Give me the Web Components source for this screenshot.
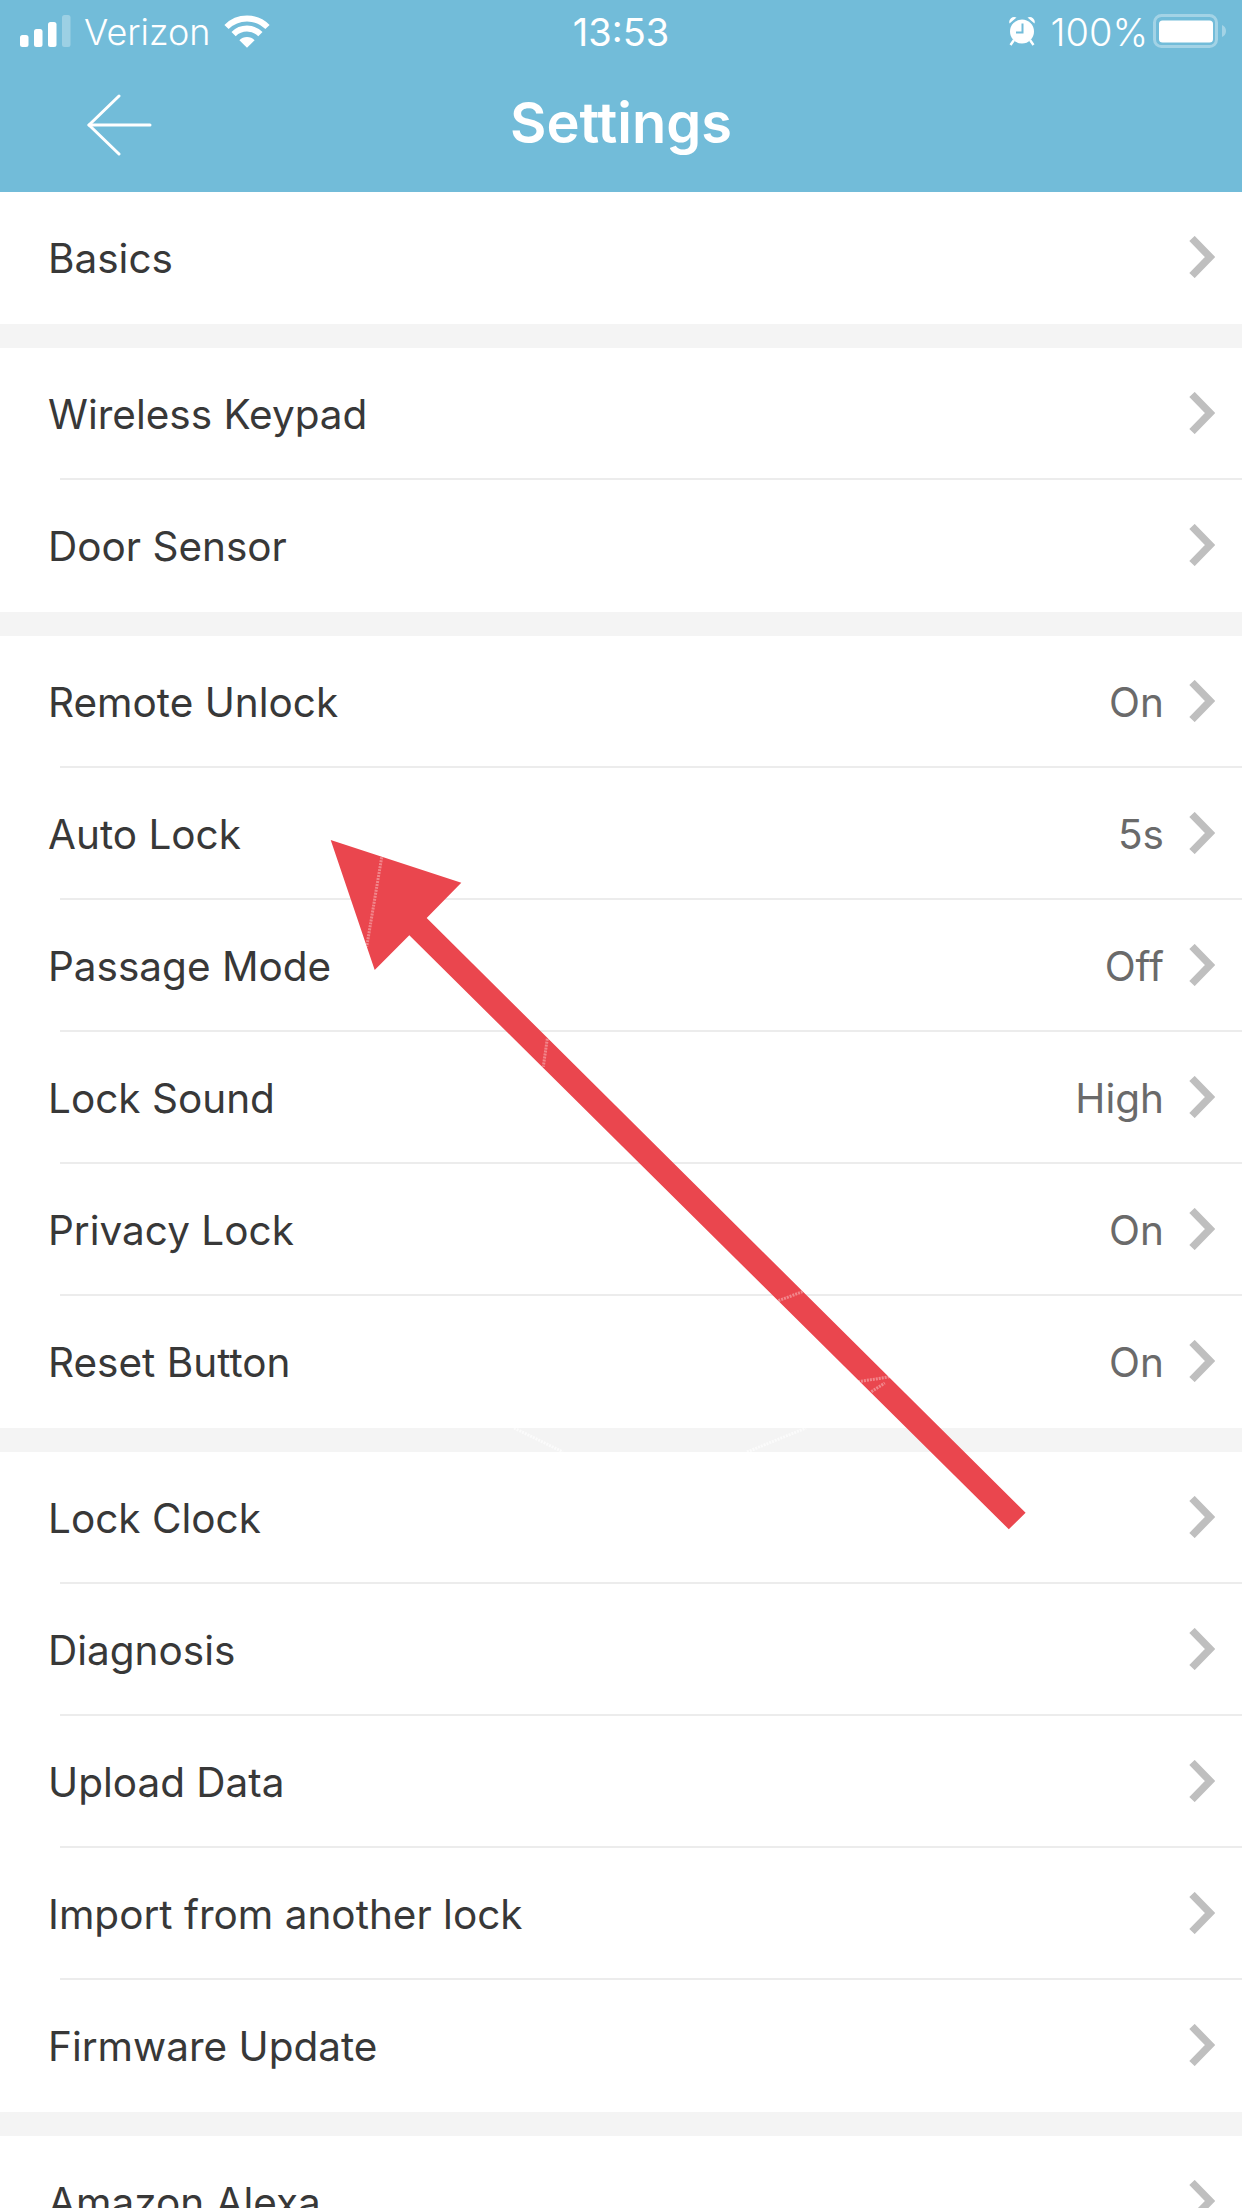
<!DOCTYPE html>
<html lang="en">
<head>
<meta charset="utf-8">
<title>Settings</title>
<style>
  html, body {
    margin: 0;
    padding: 0;
    background: #ffffff;
    font-family: Inter, "Liberation Sans", sans-serif;
  }
</style>
</head>
<body>
<lock-app>
  <lock-status-bar carrier="Verizon" time="13:53" battery="100%"></lock-status-bar>
  <lock-nav-bar title-text="Settings"></lock-nav-bar>
  <lock-group>
    <lock-row label="Basics"></lock-row>
  </lock-group>
  <lock-group>
    <lock-row label="Wireless Keypad"></lock-row>
    <lock-row label="Door Sensor"></lock-row>
  </lock-group>
  <lock-group>
    <lock-row label="Remote Unlock" value="On"></lock-row>
    <lock-row label="Auto Lock" value="5s"></lock-row>
    <lock-row label="Passage Mode" value="Off"></lock-row>
    <lock-row label="Lock Sound" value="High"></lock-row>
    <lock-row label="Privacy Lock" value="On"></lock-row>
    <lock-row label="Reset Button" value="On"></lock-row>
  </lock-group>
  <lock-group>
    <lock-row label="Lock Clock"></lock-row>
    <lock-row label="Diagnosis"></lock-row>
    <lock-row label="Upload Data"></lock-row>
    <lock-row label="Import from another lock"></lock-row>
    <lock-row label="Firmware Update"></lock-row>
  </lock-group>
  <lock-group>
    <lock-row label="Amazon Alexa"></lock-row>
  </lock-group>
  <lock-annotation slot="overlay"></lock-annotation>
</lock-app>

<script>
class LockApp extends HTMLElement {
  constructor() {
    super();

    this.attachShadow( {mode: 'open'} );
    this.shadowRoot.innerHTML = /* template */ `
      <style>
        :host {
          background: #ffffff;
          display: flex;
          flex-direction: column;
          height: 2208px;
          overflow: hidden;
          position: relative;
          width: 1242px;
        }
      </style>
      <slot></slot>
      <slot name="overlay"></slot>
    `;
  }
}

class LockStatusBar extends HTMLElement {
  constructor() {
    super();

    this.attachShadow( {mode: 'open'} );
    this.shadowRoot.innerHTML = /* template */ `
      <style>
        :host {
          align-items: center;
          background: #72bcd9;
          box-sizing: border-box;
          color: #ffffff;
          display: grid;
          flex: none;
          font-family: Inter, "Liberation Sans", sans-serif;
          font-size: 36px;
          font-weight: 300;
          grid-template-columns: 1fr auto 1fr;
          height: 60px;
          line-height: 60px;
        }

        div {
          align-items: center;
          display: flex;
          height: 60px;
        }

        svg {
          display: block;
          flex: none;
        }

        .left {
          padding-left: 20px;
        }

        .carrier {
          margin-left: 13px;
          padding-top: 2px;
        }

        .wifi {
          margin-left: 13px;
        }

        .time {
          font-size: 38px;
          font-weight: 400;
          padding-top: 2px;
        }

        .right {
          justify-content: flex-end;
          padding-right: 16px;
        }

        .percent {
          font-size: 38px;
          margin-left: 14px;
          padding-top: 2px;
        }

        .battery {
          margin-left: 5px;
        }
      </style>
      <div class="left">
        <svg width="51" height="32" viewBox="0 0 51 32" fill="#ffffff">
          <rect x="0" y="20" width="8.5" height="12" rx="2.5"/>
          <rect x="14" y="14" width="8.5" height="18" rx="2.5"/>
          <rect x="28" y="7" width="8.5" height="25" rx="2.5"/>
          <rect x="42" y="0" width="8.5" height="32" rx="2.5" opacity="0.3"/>
        </svg>
        <span class="carrier"></span>
        <svg class="wifi" width="46" height="33" viewBox="0 0 46 33" fill="none" stroke="#ffffff" stroke-width="6">
          <path d="M2.5 12 A29 29 0 0 1 43.5 12"/>
          <path d="M9.6 19.1 A19 19 0 0 1 36.4 19.1"/>
          <path fill="#ffffff" stroke="none" d="M23 32.8 L15.4 25.2 A10.8 10.8 0 0 1 30.6 25.2 Z"/>
        </svg>
      </div>
      <div class="time"></div>
      <div class="right">
        <svg width="28" height="30" viewBox="0 0 28 30">
          <path d="M1.5 7.5 A5 5 0 0 1 8.5 1.5 Z M26.5 7.5 A5 5 0 0 0 19.5 1.5 Z" fill="#ffffff"/>
          <path d="M6 24 L2.5 29 M22 24 L25.5 29" stroke="#ffffff" stroke-width="2.4" fill="none"/>
          <circle cx="14" cy="15.5" r="12" fill="#ffffff"/>
          <path d="M14.5 7.5 V16.5 H8" stroke="#72bcd9" stroke-width="2" fill="none"/>
        </svg>
        <span class="percent"></span>
        <svg class="battery" width="73" height="34" viewBox="0 0 73 34">
          <rect x="1.5" y="1.5" width="62" height="31" rx="7" fill="none" stroke="#ffffff" stroke-opacity="0.35" stroke-width="3"/>
          <rect x="6" y="6.5" width="54" height="22" rx="3.5" fill="#ffffff"/>
          <path d="M69 11 C71.5 12 73 14 73 17 C73 20 71.5 22 69 23 Z" fill="#ffffff" fill-opacity="0.35"/>
        </svg>
      </div>
    `;

    this.$carrier = this.shadowRoot.querySelector( '.carrier' );
    this.$time = this.shadowRoot.querySelector( '.time' );
    this.$percent = this.shadowRoot.querySelector( '.percent' );
  }

  connectedCallback() {
    this.$carrier.textContent = this.getAttribute( 'carrier' );
    this.$time.textContent = this.getAttribute( 'time' );
    this.$percent.textContent = this.getAttribute( 'battery' );
  }
}

class LockNavBar extends HTMLElement {
  constructor() {
    super();

    this.attachShadow( {mode: 'open'} );
    this.shadowRoot.innerHTML = /* template */ `
      <style>
        :host {
          align-items: center;
          background: #72bcd9;
          color: #ffffff;
          display: grid;
          flex: none;
          font-family: Inter, "Liberation Sans", sans-serif;
          font-size: 56px;
          font-weight: 600;
          grid-template-columns: 1fr auto 1fr;
          height: 132px;
        }

        svg {
          display: block;
          margin-left: 86px;
          margin-top: -2px;
        }

        h1 {
          font: inherit;
          margin: 0 0 6px 0;
        }
      </style>
      <svg width="66" height="62" viewBox="0 0 66 62" fill="none" stroke="#ffffff" stroke-width="3" stroke-linecap="round" stroke-linejoin="round">
        <path d="M64 31 H3"/>
        <path d="M33 2 L3 31 L33 60"/>
      </svg>
      <h1></h1>
      <span></span>
    `;

    this.$title = this.shadowRoot.querySelector( 'h1' );
  }

  connectedCallback() {
    this.$title.textContent = this.getAttribute( 'title-text' );
  }
}

class LockGroup extends HTMLElement {
  constructor() {
    super();

    this.attachShadow( {mode: 'open'} );
    this.shadowRoot.innerHTML = /* template */ `
      <style>
        :host {
          background: #ffffff;
          border-bottom: 24px solid #f4f4f4;
          display: block;
          flex: none;
        }
      </style>
      <slot></slot>
    `;
  }
}

class LockRow extends HTMLElement {
  constructor() {
    super();

    this.attachShadow( {mode: 'open'} );
    this.shadowRoot.innerHTML = /* template */ `
      <style>
        :host {
          display: flex;
          flex-direction: column;
          font-family: Inter, "Liberation Sans", sans-serif;
          font-size: 40.5px;
          font-weight: 400;
          height: 132px;
        }

        div {
          align-items: center;
          display: flex;
          flex: 1;
          padding: 0 27px 0 48px;
        }

        span {
          color: #383838;
          flex: 1;
          padding-top: 2px;
        }

        em {
          color: #6a6a6a;
          font-style: normal;
          margin-right: 25px;
          padding-top: 2px;
        }

        svg {
          display: block;
          flex: none;
        }

        hr {
          background: #ececec;
          border: 0;
          height: 2px;
          margin: 0 0 0 60px;
        }

        :host( :last-child ) hr {
          background: transparent;
        }
      </style>
      <div>
        <span></span>
        <em></em>
        <svg width="26" height="42" viewBox="0 0 26 42" fill="none" stroke="#bfbfbf" stroke-width="7.5">
          <path d="M3 2.5 L21 21 L3 39.5"/>
        </svg>
      </div>
      <hr>
    `;

    this.$label = this.shadowRoot.querySelector( 'span' );
    this.$value = this.shadowRoot.querySelector( 'em' );
  }

  static get observedAttributes() {
    return ['label', 'value'];
  }

  attributeChangedCallback() {
    this._render();
  }

  connectedCallback() {
    this._render();
  }

  _render() {
    this.$label.textContent = this.getAttribute( 'label' );
    this.$value.textContent = this.getAttribute( 'value' );
  }
}

// Red arrow drawn over the screenshot, free placement on the page
class LockAnnotation extends HTMLElement {
  constructor() {
    super();

    this.attachShadow( {mode: 'open'} );
    this.shadowRoot.innerHTML = /* template */ `
      <style>
        :host {
          inset: 0;
          pointer-events: none;
          position: absolute;
        }

        svg {
          display: block;
        }

        .flaw {
          fill: none;
          stroke: #ffffff;
          stroke-dasharray: 2 1;
          stroke-opacity: 0.35;
          stroke-width: 3;
        }
      </style>
      <svg width="1242" height="2208" viewBox="0 0 1242 2208">
        <path class="flaw" style="stroke-opacity:.6" d="M514 1428 L563 1452 M747 1452 L806 1428"/>
        <polygon fill="#ea464e" points="330.7,840 461.3,882.7 426.7,918 1025.6,1512.7 1008.8,1529.3 409.3,935.3 374.7,970"/>
        <path class="flaw" d="M381.7 857.3 L366.7 946.7 M547.3 1038.7 L543.3 1066.7 M778.4 1300.7 L802.5 1291.7 M858 1381.7 L890.5 1376.7 M871.4 1391.7 L884.8 1383"/>
      </svg>
    `;
  }
}

window.customElements.define( 'lock-app', LockApp );
window.customElements.define( 'lock-status-bar', LockStatusBar );
window.customElements.define( 'lock-nav-bar', LockNavBar );
window.customElements.define( 'lock-group', LockGroup );
window.customElements.define( 'lock-row', LockRow );
window.customElements.define( 'lock-annotation', LockAnnotation );
</script>
</body>
</html>
